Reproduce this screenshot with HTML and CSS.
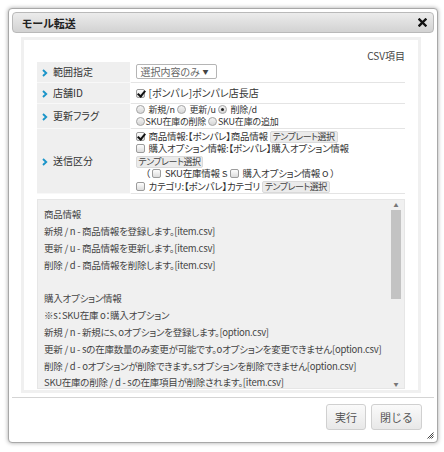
FILE: index.html
```html
<!DOCTYPE html>
<html lang="ja">
<head>
    <meta charset="UTF-8">
    <title>モール転送</title>
    <link rel="stylesheet" href="styles.css">
</head>
<body>
    <div class="dialog">
        <div class="titlebar">
            <span class="title">モール転送</span>
            <svg class="close" width="9" height="9" viewBox="0 0 9 9"><path d="M1.5 1.5 L7.5 7.5 M7.5 1.5 L1.5 7.5" stroke="#111" stroke-width="2.4" stroke-linecap="square"/></svg>
        </div>

        <div class="panel">
            <div class="csv-label">CSV項目</div>
            <table class="form">
                <tr class="row-1">
                    <th><svg class="chev" width="6" height="8" viewBox="0 0 6 8"><path d="M1 1 L4.2 4 L1 7" fill="none" stroke="#1b95c9" stroke-width="1.9"/></svg>範囲指定</th>
                    <td><span class="select">選択内容のみ<span class="caret">▼</span></span></td>
                </tr>
                <tr class="row-2">
                    <th><svg class="chev" width="6" height="8" viewBox="0 0 6 8"><path d="M1 1 L4.2 4 L1 7" fill="none" stroke="#1b95c9" stroke-width="1.9"/></svg>店舗ID</th>
                    <td><span class="chk on"></span>[ポンパレ]ポンパレ店長店</td>
                </tr>
                <tr class="row-3">
                    <th><svg class="chev" width="6" height="8" viewBox="0 0 6 8"><path d="M1 1 L4.2 4 L1 7" fill="none" stroke="#1b95c9" stroke-width="1.9"/></svg>更新フラグ</th>
                    <td>
                        <div class="line"><span class="radio"></span>新規/n <span class="radio"></span>更新/u <span class="radio on"></span>削除/d</div>
                        <div class="line"><span class="radio tight"></span>SKU在庫の削除 <span class="radio tight"></span>SKU在庫の追加</div>
                    </td>
                </tr>
                <tr class="row-4">
                    <th><svg class="chev" width="6" height="8" viewBox="0 0 6 8"><path d="M1 1 L4.2 4 L1 7" fill="none" stroke="#1b95c9" stroke-width="1.9"/></svg>送信区分</th>
                    <td>
                        <div class="line"><span class="chk on"></span>商品情報:【ポンパレ】商品情報 <span class="tpl">テンプレート選択</span></div>
                        <div class="line"><span class="chk"></span>購入オプション情報:【ポンパレ】購入オプション情報</div>
                        <div class="line"><span class="tpl">テンプレート選択</span></div>
                        <div class="line sub">（ <span class="chk"></span>SKU在庫情報 ｓ <span class="chk"></span>購入オプション情報 ｏ ）</div>
                        <div class="line"><span class="chk"></span>カテゴリ:【ポンパレ】カテゴリ <span class="tpl">テンプレート選択</span></div>
                    </td>
                </tr>
            </table>

            <div class="memo">
                <div class="memo-text">
                    <div>商品情報</div>
                    <div>新規 / n - 商品情報を登録します。[item.csv]</div>
                    <div>更新 / u - 商品情報を更新します。[item.csv]</div>
                    <div>削除 / d - 商品情報を削除します。[item.csv]</div>
                    <div>&nbsp;</div>
                    <div>購入オプション情報</div>
                    <div>※s：SKU在庫 o：購入オプション</div>
                    <div>新規 / n - 新規にs、oオプションを登録します。[option.csv]</div>
                    <div>更新 / u - sの在庫数量のみ変更が可能です。oオプションを変更できません[option.csv]</div>
                    <div>削除 / d - oオプションが削除できます。sオプションを削除できません[option.csv]</div>
                    <div>SKU在庫の削除 / d - sの在庫項目が削除されます。[item.csv]</div>
                </div>
                <div class="scrollbar">
                    <span class="arrow">▲</span>
                    <div class="track"><div class="thumb"></div></div>
                    <span class="arrow">▼</span>
                </div>
            </div>
        </div>

        <div class="footer">
            <button class="btn">実行</button>
            <button class="btn">閉じる</button>
        </div>

        <svg class="grip" width="7" height="7" viewBox="0 0 7 7"><path d="M6.5 0.5 L0.5 6.5 M6.5 2.5 L2.5 6.5 M6.5 4.5 L4.5 6.5" stroke="#444" stroke-width="1"/></svg>
    </div>
</body>
</html>
```

FILE: styles.css
```css
* {
    margin: 0;
    padding: 0;
    box-sizing: border-box;
}

body {
    background-color: #fff;
    color: #333;
    font-family: "Noto Sans CJK JP", "Liberation Sans", sans-serif;
    font-feature-settings: "palt";
    font-size: 10px;
}

.dialog {
    position: relative;
    margin: 8px;
    width: 430px;
    height: 435px;
    padding: 3px;
    border: 1px solid #a8a8a8;
    border-radius: 4px;
    background-color: #fff;
    box-shadow: 0 0 4px rgba(0, 0, 0, 0.35);
}

.titlebar {
    display: flex;
    align-items: center;
    justify-content: space-between;
    height: 21px;
    padding: 0 6px 0 9px;
    border: 1px solid #b9b9b9;
    border-radius: 4px;
    background: linear-gradient(to bottom, #ececec 0%, #d2d2d2 100%);
}

.title {
    font-weight: bold;
    font-size: 11px;
    color: #222;
}

.close {
    display: block;
}

.panel {
    margin: 4px 13px 0 9px;
    height: 356px;
    padding: 10px 13px 3px;
    border: 3px solid #f0f0f0;
}

.csv-label {
    text-align: right;
    height: 12px;
    line-height: 12px;
    color: #444;
}

.form {
    width: 100%;
    border-collapse: collapse;
}

.form th {
    width: 93px;
    padding-left: 5px;
    text-align: left;
    font-weight: normal;
    background-color: #efefef;
    border-bottom: 1px solid #f8f8f8;
    border-right: 1px solid #fff;
    white-space: nowrap;
}

.form td {
    padding: 0 5px;
    border-bottom: 1px solid #e4e4e4;
    white-space: nowrap;
}

.chev {
    margin-right: 5px;
    vertical-align: -0.5px;
}

.row-1 th, .row-1 td { height: 20px; }
.row-2 th, .row-2 td { height: 21px; }
.row-3 th, .row-3 td { height: 24px; }

.row-3 td {
    font-size: 9px;
    letter-spacing: -0.2px;
}

.row-4 td {
    padding-top: 1px;
    padding-bottom: 1px;
    font-size: 9.5px;
    letter-spacing: -0.25px;
}

.line {
    height: 12.6px;
    line-height: 12.6px;
}

.row-3 .line {
    height: 12px;
    line-height: 12px;
}

.sub {
    padding-left: 10px;
}

.select {
    display: inline-flex;
    align-items: center;
    justify-content: space-between;
    width: 81px;
    height: 15px;
    padding: 0 7px 0 4px;
    border: 1px solid #b5b5b5;
    border-radius: 2px;
    color: #666;
}

.caret {
    font-size: 6px;
    color: #444;
}

.chk {
    display: inline-block;
    position: relative;
    width: 9px;
    height: 9px;
    margin-right: 4px;
    vertical-align: -1px;
    border: 1px solid #9c9c9c;
    border-radius: 2px;
    background: linear-gradient(to bottom, #fdfdfd, #dcdcdc);
}

.chk.on::after {
    content: "";
    position: absolute;
    left: 2px;
    top: -1px;
    width: 3px;
    height: 6px;
    border: solid #111;
    border-width: 0 2px 2px 0;
    transform: rotate(40deg);
}

.radio {
    display: inline-block;
    position: relative;
    width: 9px;
    height: 9px;
    margin-right: 4px;
    vertical-align: -1px;
    border: 1px solid #a5a5a5;
    border-radius: 50%;
    background: linear-gradient(to bottom, #f4f4f4, #d6d6d6);
}

.radio.tight {
    margin-right: 1px;
}

.radio.on::after {
    content: "";
    position: absolute;
    left: 2px;
    top: 2px;
    width: 3px;
    height: 3px;
    border-radius: 50%;
    background-color: #222;
}

.tpl {
    display: inline-block;
    height: 12.6px;
    line-height: 10.6px;
    padding: 0 2px;
    border: 1px solid #dadada;
    border-radius: 2px;
    background-color: #ebebeb;
    font-size: 9px;
    letter-spacing: -0.5px;
    color: #444;
}

.memo {
    display: flex;
    margin-top: 5px;
    height: 190px;
    background-color: #f0f0f0;
    border: 1px solid #e6e6e6;
    overflow: hidden;
}

.memo-text {
    flex: 1;
    padding: 6px 0 0 6px;
    font-size: 9.5px;
    letter-spacing: -0.25px;
    line-height: 16.8px;
    color: #444;
    white-space: nowrap;
    overflow: hidden;
}

.scrollbar {
    display: flex;
    flex-direction: column;
    align-items: center;
    width: 12px;
    margin-right: 2px;
}

.arrow {
    font-size: 5px;
    line-height: 9px;
    color: #777;
}

.track {
    flex: 1;
    width: 10px;
}

.thumb {
    height: 89px;
    margin-top: 1px;
    background-color: #c3c3c3;
}

.footer {
    display: flex;
    justify-content: flex-end;
    gap: 5px;
    margin-top: 4px;
    padding: 6px 12px 0 0;
    border-top: 1px solid #d4d4d4;
}

.btn {
    height: 26px;
    padding: 0 8px;
    border: 1px solid #d0d0d0;
    border-radius: 3px;
    background: linear-gradient(to bottom, #fafafa, #e8e8e8);
    font-family: inherit;
    font-size: 11px;
    color: #555;
}

.grip {
    position: absolute;
    right: 3px;
    bottom: 3px;
}
```
